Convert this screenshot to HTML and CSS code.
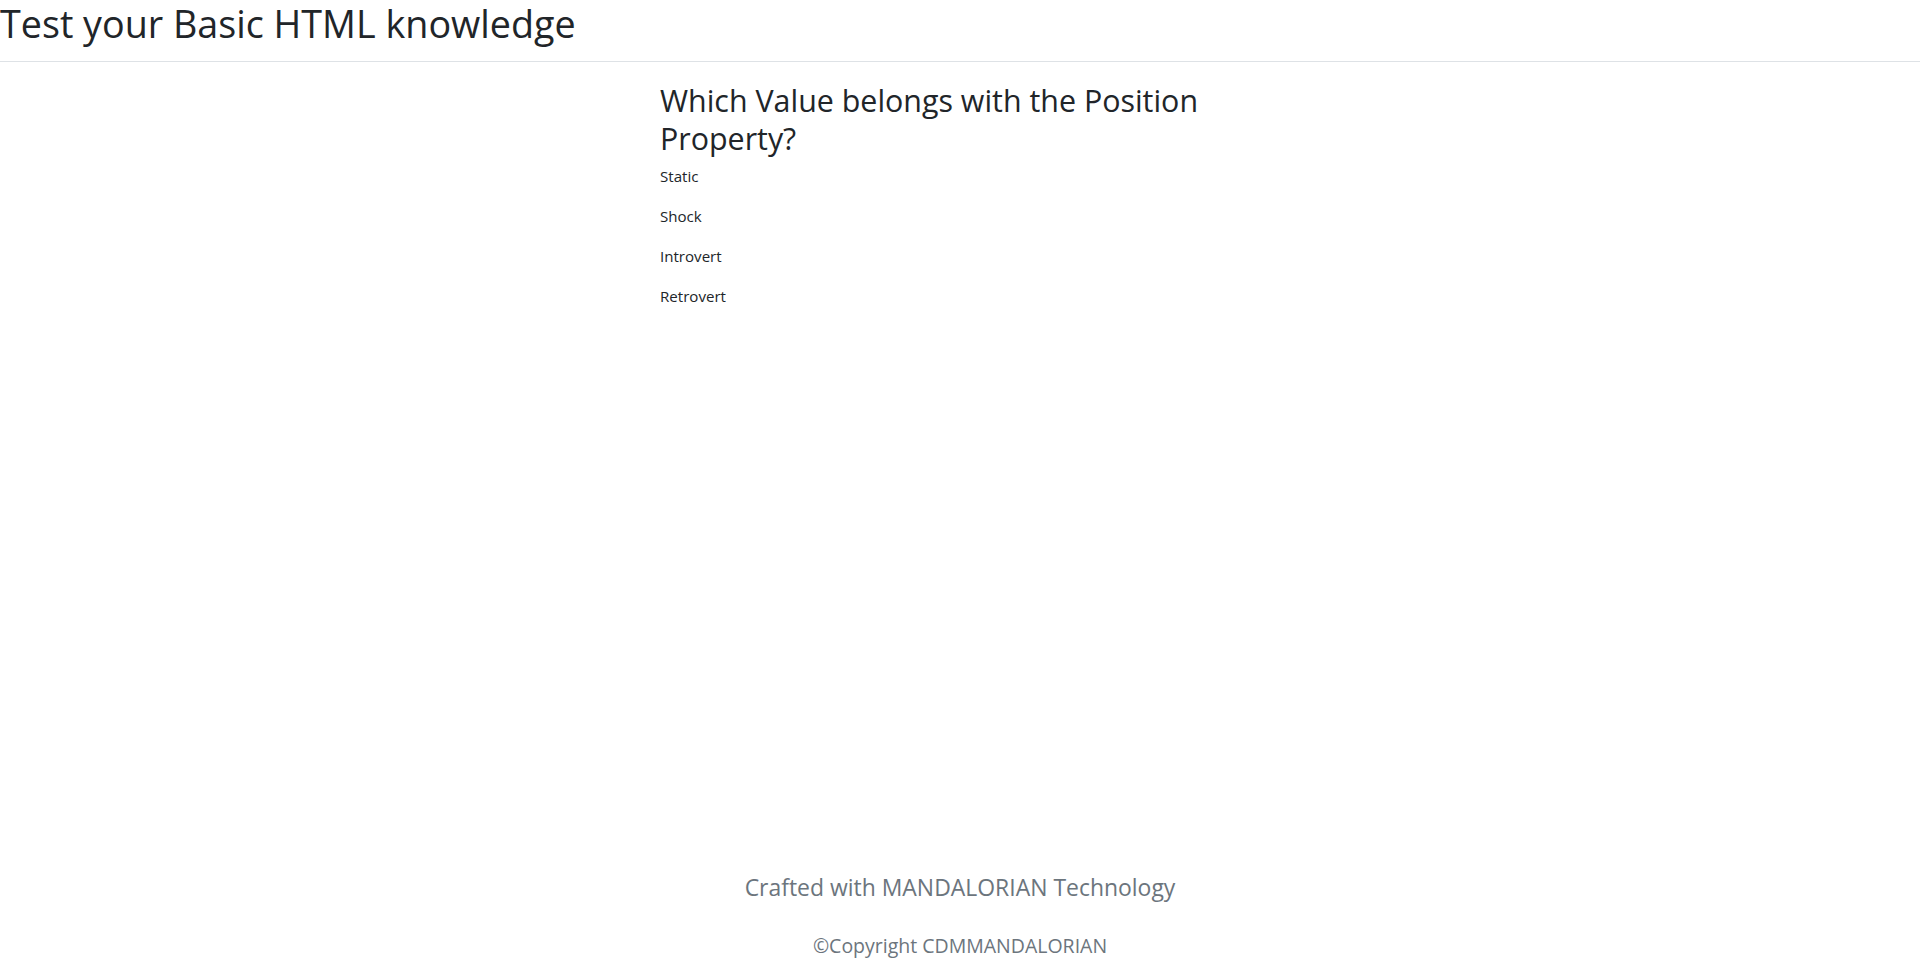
FILE: index.html
```html
<!DOCTYPE html>
<html lang="en">
<head>
<meta charset="utf-8">
<title>Test your Basic HTML knowledge</title>
<link rel="stylesheet" href="styles.css">
</head>
<body>
<header class="site-header">
  <h1 class="site-title">Test your Basic HTML knowledge</h1>
</header>
<main class="quiz">
  <h2 class="question">Which Value belongs with the Position Property?</h2>
  <p class="option">Static</p>
  <p class="option">Shock</p>
  <p class="option">Introvert</p>
  <p class="option">Retrovert</p>
</main>
<footer class="site-footer">
  <p class="crafted">Crafted with MANDALORIAN Technology</p>
  <p class="copyright">&copy;Copyright CDMMANDALORIAN</p>
</footer>
</body>
</html>
```
FILE: styles.css
```css
html, body {
  margin: 0;
  padding: 0;
}

body {
  min-height: 100vh;
  display: flex;
  flex-direction: column;
  font-family: "Open Sans", "Noto Sans", sans-serif;
  color: #212529;
  background: #ffffff;
}

.site-header {
  padding-bottom: 13px;
  border-bottom: 1px solid #dee2e6;
}

.site-title {
  margin: 0;
  font-size: 37.7px;
  line-height: 48px;
  font-weight: 400;
  color: #212529;
}

.quiz {
  width: 600px;
  margin: 20px auto 0;
}

.question {
  margin: 0 0 5px;
  font-size: 30.4px;
  line-height: 38.4px;
  font-weight: 400;
  color: #212529;
}

.option {
  margin: 0 0 16px;
  font-size: 15.1px;
  line-height: 24px;
  color: #212529;
}

.site-footer {
  margin-top: auto;
  padding-bottom: 6px;
  text-align: center;
  color: #6c757d;
}

.crafted {
  margin: 0 0 32px;
  font-size: 22.95px;
  line-height: 28.8px;
}

.copyright {
  margin: 0;
  font-size: 19.5px;
  line-height: 24px;
}
```
